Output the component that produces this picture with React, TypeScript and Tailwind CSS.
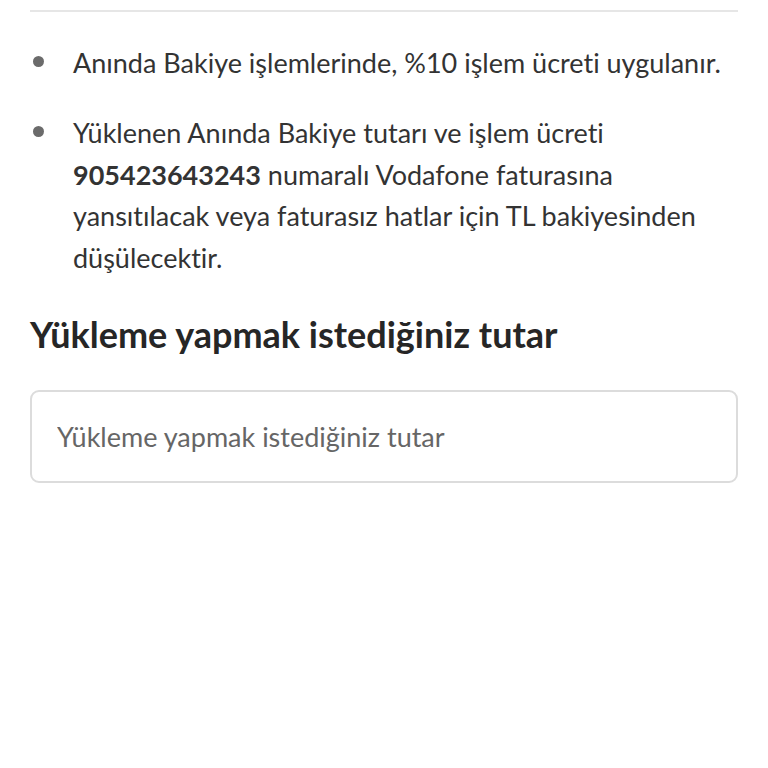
import React from 'react';

const App: React.FC = () => {
  return (
    <div className="min-h-screen w-[768px] bg-white text-[#333333] [font-variant-ligatures:none]" style={{ fontFamily: 'Lato, "Noto Sans", sans-serif' }}>
      <div className="px-[30px]">
        <div className="h-[2px] bg-[#e6e6e6] mt-[10px]" />

        {/* Info bullets */}
        <ul className="mt-[30px] flex flex-col gap-[29px]">
          <li className="flex items-start">
            <span className="mt-[14px] ml-[3px] h-[11px] w-[11px] shrink-0 rounded-full bg-[#6b6b6b]" />
            <p className="ml-[29px] text-[27px] leading-[41px]">
              Anında Bakiye işlemlerinde, %10 işlem ücreti uygulanır.
            </p>
          </li>
          <li className="flex items-start">
            <span className="mt-[14px] ml-[3px] h-[11px] w-[11px] shrink-0 rounded-full bg-[#6b6b6b]" />
            <p className="ml-[29px] pr-[28px] text-[27px] leading-[41.5px]">
              Yüklenen Anında Bakiye tutarı ve işlem ücreti{' '}
              <span className="font-bold">905423643243</span> numaralı Vodafone faturasına yansıtılacak veya faturasız hatlar için TL bakiyesinden düşülecektir.
            </p>
          </li>
        </ul>

        <h2 className="mt-[36px] text-[36px] font-bold leading-[40px] text-[#262626]">
          Yükleme yapmak istediğiniz tutar
        </h2>

        <div className="mt-[36px]">
          <input
            type="text"
            placeholder="Yükleme yapmak istediğiniz tutar"
            className="h-[93px] w-full rounded-[9px] border-2 border-[#dcdcdc] px-[25px] text-[27px] text-[#333] placeholder:text-[#666666] outline-none [font-variant-ligatures:none]"
          />
        </div>
      </div>
    </div>
  );
};

export default App;
